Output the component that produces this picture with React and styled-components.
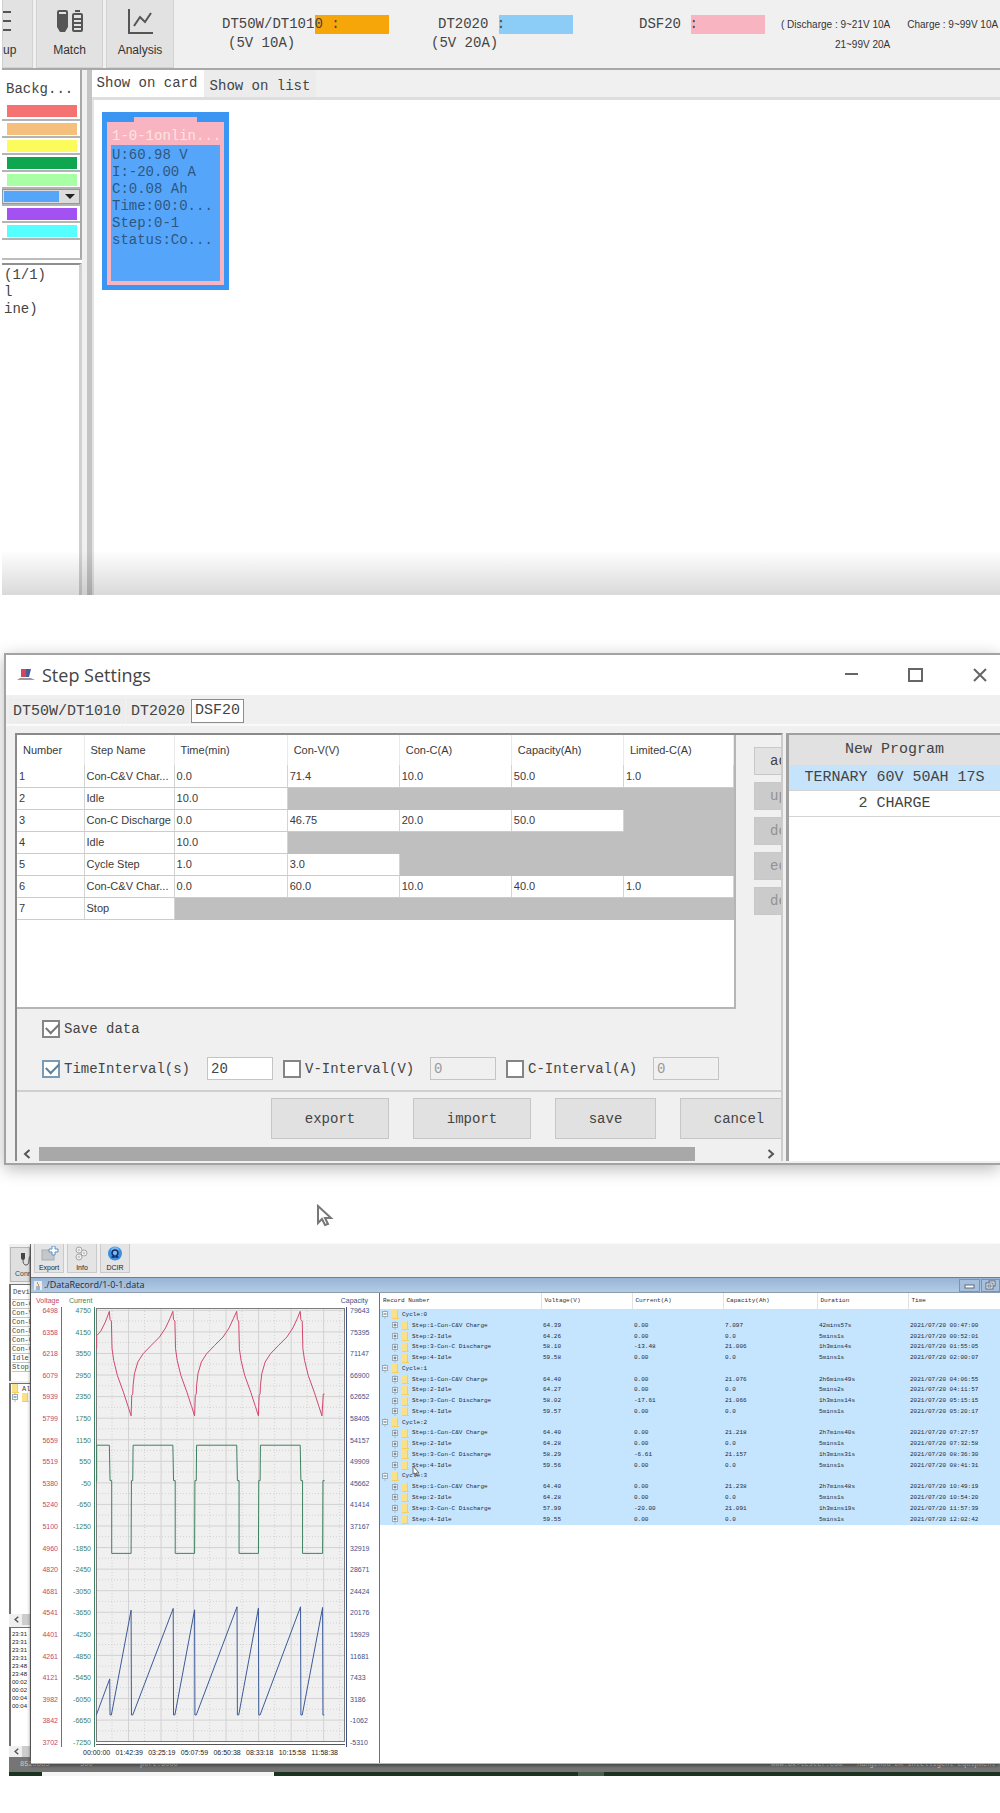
import React, { useState } from 'react'
import styled, { createGlobalStyle } from 'styled-components'

const MONO = '"Liberation Mono", monospace'
const SANS = '"Liberation Sans", Arial, sans-serif'
const UI = '"Open Sans", "Noto Sans", sans-serif'

const GlobalStyle = createGlobalStyle`
    *{
        box-sizing: border-box;
    }
    body{
        margin: 0;
        background: #ffffff;
        color: #444444;
        font-family: ${MONO};
    }
    button, input, select{
        font-family: inherit;
        color: inherit;
        margin: 0;
        border-radius: 0;
    }
    table{
        border-collapse: collapse;
        border-spacing: 0;
    }
    th, td{
        padding: 0;
        text-align: left;
        font-weight: normal;
    }
`

const Page = styled.div`
    overflow: hidden;
`

/* ---------- device monitor ---------- */

const Monitor = styled.section`
    position: relative;
    margin-left: 2px;
    min-height: 595px;
    display: flex;
    flex-direction: column;
    font-size: 14px;
`
const Fade = styled.div`
    position: absolute;
    left: 0;
    right: 0;
    bottom: 0;
    height: 45px;
    background: linear-gradient(rgba(0,0,0,0), rgba(0,0,0,.15));
    pointer-events: none;
`
const Toolbar = styled.div`
    display: flex;
    height: 70px;
    background: #f0f0f0;
    border-bottom: 2px solid #a8a8a8;
    white-space: nowrap;
`
const ToolButton = styled.button`
    flex: none;
    width: ${props => props.$w}px;
    margin-right: 3px;
    padding: 8px 0 0;
    display: flex;
    flex-direction: column;
    align-items: ${props => props.$start ? 'flex-start' : 'center'};
    gap: 8px;
    overflow: hidden;
    background: #e2e2e2;
    border: 1px solid #d2d2d2;
    border-top: 0;
    font: 12px/16px ${SANS};
    color: #333333;
    svg{
        flex: none;
    }
`
const Legend = styled.div`
    flex: none;
    width: ${props => props.$w}px;
    padding-top: 15px;
    line-height: 19px;
    padding-left: ${props => props.$pad || 0}px;
`
const LegendLine = styled.div`
    display: flex;
    span{
        position: relative;
        z-index: 1;
        white-space: pre;
    }
`
const LegendSub = styled.div`
    padding-left: ${props => props.$pad || 0}px;
`
const Swatch = styled.i`
    width: 74px;
    height: 19px;
    margin-left: -${props => props.$under}px;
    background: ${props => props.$color};
`
const Limits = styled.div`
    flex: none;
    padding-top: 15px;
    margin-right: 17px;
    text-align: right;
    font: 10px/20px ${SANS};
    color: #333333;
`
const Body = styled.div`
    flex: 1;
    display: flex;
`
const Sidebar = styled.aside`
    flex: none;
    width: 85px;
    display: flex;
    flex-direction: column;
    background: #ffffff;
    border-right: 5px solid #f0f0f0;
`
const ColorPanel = styled.div`
    height: 190px;
    border-right: 2px solid #a8a8a8;
    border-bottom: 2px solid #bdbdbd;
    table{
        width: 100%;
    }
    th{
        height: 33px;
        padding: 4px 0 0 4px;
    }
    td{
        height: 17px;
        padding: 0 3px 0 5px;
        border-bottom: 2px solid #b4b4b4;
    }
    td.picker{
        padding: 0;
    }
`
const ColorBar = styled.div`
    height: 12px;
    background: ${props => props.$color};
`
const ColorPicker = styled.div`
    display: flex;
    height: 15px;
    padding: 1px;
    background: #dcdcdc;
    border: 1px solid #8a9aa8;
    select{
        flex: 1;
        min-width: 0;
        height: 11px;
        padding: 0;
        border: 0;
        appearance: none;
        background: #55a6f8;
        color: transparent;
    }
    svg{
        flex: none;
        margin-left: 3px;
    }
`
const TreePanel = styled.div`
    flex: 1;
    margin-top: 3px;
    padding: 2px 0 0 2px;
    border-top: 2px solid #8f8f8f;
    border-right: 3px solid #d0d0d0;
    line-height: 17px;
    overflow: hidden;
`
const Main = styled.div`
    flex: 1;
    min-width: 0;
    display: flex;
    flex-direction: column;
    border-left: 5px solid #c4c4c4;
`
const MonitorTabs = styled.div`
    display: flex;
    height: 30px;
    background: #f0f0f0;
    border-bottom: 3px solid #dedede;
`
const MonitorTab = styled.button`
    width: 112px;
    padding: ${props => props.$active ? '0 2px 1px 0' : '4px 0 0'};
    border: 0;
    background: ${props => props.$active ? '#ffffff' : '#ececec'};
    font-size: 14px;
    text-align: center;
    white-space: nowrap;
`
const CardArea = styled.div`
    flex: 1;
    padding: 12px 8px;
    border-left: 2px solid #e4e4e4;
`
const Card = styled.div`
    width: 127px;
    height: 178px;
    padding: 5px;
    display: flex;
    flex-direction: column;
    align-items: center;
    background: #3a96f2;
    color: #2f567f;
`
const CardCap = styled.div`
    width: 63px;
    height: 5px;
    background: #f9b4c2;
`
const CardFrame = styled.div`
    align-self: stretch;
    flex: 1;
    padding: 0 4px 4px;
    display: flex;
    flex-direction: column;
    background: #f9b4c2;
    white-space: nowrap;
`
const CardTitle = styled.div`
    height: 23px;
    padding: 6px 0 0 1px;
    line-height: 17px;
    color: #fde4e0;
`
const CardInfo = styled.div`
    flex: 1;
    padding: 2px 0 0 1px;
    line-height: 17px;
    background: #55a6fb;
`

/* ---------- step settings ---------- */

const Dialog = styled.section`
    margin: 58px 0 0 4px;
    border: 2px solid #a3a3a3;
    border-right: 0;
    background: #f0f0f0;
    box-shadow: 0 4px 16px rgba(0,0,0,.28);
    font-size: 14px;
`
const TitleBar = styled.div`
    display: flex;
    align-items: center;
    height: 40px;
    padding: 0 12px 0 11px;
    background: #ffffff;
    h2{
        flex: 1;
        margin: 0 0 0 7px;
        font: 18px/24px ${UI};
    }
`
const WindowButton = styled.button`
    width: 16px;
    height: 16px;
    margin-left: 48px;
    padding: 0;
    border: 0;
    background: none;
    svg{
        display: block;
    }
`
const DialogTabs = styled.div`
    display: flex;
    gap: 2px;
    height: 29px;
    padding: 4px 0 1px 3px;
`
const DialogTab = styled.button`
    padding: ${props => props.$active ? '0 3px' : '2px 3px 0'};
    border: 1px solid ${props => props.$active ? '#8c8c8c' : '#ebebeb'};
    background: ${props => props.$active ? '#ffffff' : '#ededed'};
    font-size: 15px;
    line-height: 20px;
`
const DialogBody = styled.div`
    display: flex;
    padding: 7px 0 2px 9px;
    border-top: 2px solid #fafafa;
`
const Editor = styled.div`
    flex: 1;
    min-width: 0;
    overflow: hidden;
    border-top: 2px solid #8a8a8a;
    border-left: 2px solid #8a8a8a;
    border-right: 2px solid #cccccc;
`
const EditorTop = styled.div`
    display: flex;
`
const StepTableBox = styled.div`
    flex: 1;
    min-width: 0;
    min-height: 274px;
    background: #ffffff;
    border-right: 2px solid #b5b5b5;
    border-bottom: 2px solid #b5b5b5;
`
const StepTable = styled.table`
    width: 100%;
    table-layout: fixed;
    font: 11px/16px ${SANS};
    color: #3a3a3a;
    th{
        height: 30px;
        padding-left: 6px;
        border-right: 1px solid #ebebeb;
    }
    td{
        height: 22px;
        padding-left: 2px;
        white-space: nowrap;
        overflow: hidden;
    }
`
const StepCell = styled.td`
    background: ${props => props.$off ? '#bfbfbf' : '#ffffff'};
    border-right: 1px solid ${props => props.$off ? '#bfbfbf' : '#d4d4d4'};
    border-bottom: 1px solid ${props => props.$off ? '#bfbfbf' : '#cccccc'};
`
const SideButtons = styled.div`
    flex: none;
    width: 45px;
    display: flex;
    flex-direction: column;
    gap: 7px;
    padding: 12px 0 0 18px;
    overflow: hidden;
`
const SideButton = styled.button`
    width: 70px;
    height: 28px;
    padding: 0 0 0 15px;
    text-align: left;
    border: 1px solid #c8c8c8;
    background: #e2e2e2;
    font-size: 14px;
    &:disabled{
        background: #cbcbcb;
        color: #929292;
    }
`
const Options = styled.div`
    padding: 10px 0 10px 25px;
    border-bottom: 2px solid #cfcfcf;
    display: flex;
    flex-direction: column;
    gap: 19px;
`
const OptionRow = styled.div`
    display: flex;
    align-items: center;
    height: ${props => props.$tall ? 23 : 19}px;
`
const Check = styled.label`
    flex: none;
    display: flex;
    align-items: center;
    gap: 4px;
    width: ${props => props.$w}px;
    white-space: nowrap;
    input{
        appearance: none;
        position: relative;
        width: 18px;
        height: 18px;
        background: #ffffff;
        border: 2px solid ${props => props.$hot ? '#7a9bb5' : '#858585'};
    }
    input:checked::after{
        content: '';
        position: absolute;
        left: 2px;
        top: 1px;
        width: 11px;
        height: 6px;
        border-left: 2px solid ${props => props.$hot ? '#5f8099' : '#777777'};
        border-bottom: 2px solid ${props => props.$hot ? '#5f8099' : '#777777'};
        transform: rotate(-45deg);
    }
`
const NumberBox = styled.input`
    flex: none;
    width: 66px;
    height: 23px;
    margin-right: 10px;
    padding: 0 3px;
    border: 1px solid #c4c4c4;
    background: #ffffff;
    font-size: 14px;
    &:disabled{
        background: #f0f0f0;
        color: #9a9a9a;
    }
`
const Footer = styled.div`
    display: flex;
    gap: 24px;
    padding: 6px 0 7px 254px;
`
const FooterButton = styled.button`
    flex: none;
    width: ${props => props.$w || 118}px;
    height: 41px;
    padding: 0;
    border: 1px solid #c6c6c6;
    background: #e1e1e1;
    font-size: 14px;
`
const ScrollTrack = styled.div`
    display: flex;
    align-items: center;
    gap: 7px;
    height: 15px;
    padding: 0 5px;
    svg{
        flex: none;
    }
`
const ScrollThumb = styled.div`
    flex: none;
    width: 87%;
    height: 14px;
    margin-right: auto;
    background: #a8a8a8;
`
const Programs = styled.div`
    flex: none;
    width: 214px;
    margin-left: 3px;
    background: #ffffff;
    border-top: 2px solid #a0a0a0;
    border-left: 3px solid #a0a0a0;
`
const ProgramHead = styled.div`
    height: 30px;
    line-height: 30px;
    background: #e1e1e1;
    text-align: center;
    font-size: 15px;
`
const Program = styled.button`
    display: block;
    width: 100%;
    height: 26px;
    padding: 0;
    border: 0;
    border-bottom: 1px solid #d4d4d4;
    background: ${props => props.$active ? '#c6e3fc' : '#ffffff'};
    text-align: center;
    white-space: nowrap;
    font-size: 15px;
`
const Pointer = styled.div`
    height: 79px;
    padding: 39px 0 0 316px;
`

/* ---------- data record ---------- */

const Record = styled.section`
    margin-left: 9px;
    margin-bottom: 37px;
`
const RecordRow = styled.div`
    display: flex;
`
const Behind = styled.div`
    flex: none;
    width: 22px;
    height: 513px;
    overflow: hidden;
    display: flex;
    flex-direction: column;
    background: #f0f0f0;
    border-right: 1px solid #6d6d6d;
    white-space: nowrap;
    font-size: 7px;
`
const BehindTool = styled.div`
    height: 35px;
    margin: 3px 0 0 1px;
    padding: 4px 0 0 4px;
    background: #dfdfdf;
    border: 1px solid #b8b8b8;
    font: 7px/10px ${SANS};
    svg{
        display: block;
        margin-left: 5px;
    }
`
const BehindPanel = styled.div`
    flex: ${props => props.$h ? 'none' : 1};
    height: ${props => props.$h ? props.$h + 'px' : 'auto'};
    margin-top: 2px;
    padding-left: 1px;
    background: #ffffff;
    border-top: 1px solid #707070;
    border-left: 2px solid #707070;
    overflow: hidden;
`
const StepNames = styled.div`
    display: grid;
    grid-auto-rows: 1fr;
    height: 87px;
    div{
        display: flex;
        align-items: center;
        border-bottom: 1px solid #c4c4c4;
    }
    div:first-child{
        grid-row: span 2;
        padding-left: 1px;
    }
`
const Log = styled.div`
    padding: 2px 0 0 0;
    font: 6px/8px ${SANS};
    color: #222222;
`
const MiniScroll = styled.div`
    flex: none;
    height: 11px;
    padding: 2px 0 0 4px;
    background: linear-gradient(90deg, #f0f0f0 13px, #cdcdcd 13px);
    svg{
        display: block;
    }
`
const Window = styled.div`
    flex: 1;
    min-width: 0;
    height: 520px;
    margin-bottom: -7px;
    position: relative;
    display: flex;
    flex-direction: column;
    background: #ffffff;
    border-bottom: 1px solid #b5b5b5;
    box-shadow: -1px 2px 3px rgba(0,0,0,.4);
`
const WindowTools = styled.div`
    display: flex;
    gap: 3px;
    height: 33px;
    padding: 0 3px 4px;
    background: #f0f0f0;
`
const WindowTool = styled.button`
    width: 30px;
    padding: 2px 0 0;
    display: flex;
    flex-direction: column;
    align-items: center;
    gap: 2px;
    border: 1px solid #c9c9c9;
    border-top: 0;
    background: #e4e4e4;
    font: 7px/9px ${SANS};
    color: #222222;
`
const WindowTitle = styled.div`
    display: flex;
    align-items: center;
    height: 16px;
    padding-left: 3px;
    border-top: 1px solid #6c7f94;
    border-bottom: 1px solid #8c9bab;
    background: linear-gradient(#97b4d4, #b3cce6);
    span{
        flex: 1;
        margin-left: 2px;
        font: 9px/14px ${UI};
        color: #1c2a3a;
    }
`
const TitleButton = styled.button`
    width: 21px;
    height: 13px;
    margin-left: 1px;
    padding: 0;
    border: 1px solid #7d93ab;
    background: #a5bfdc;
    &:last-child{
        width: 19px;
    }
    svg{
        display: block;
        margin: 0 auto;
    }
`
const WindowBody = styled.div`
    flex: 1;
    display: flex;
    min-height: 0;
`
const ChartPane = styled.div`
    flex: none;
    width: 348px;
    font: 7px/8px ${SANS};
`
const ChartHead = styled.div`
    display: flex;
    padding: 4px 11px 0 5px;
`
const AxisName = styled.span`
    width: 33px;
    color: ${props => props.$color};
    &:last-child{
        width: auto;
        margin-left: auto;
    }
`
const ChartRow = styled.div`
    display: flex;
    height: 442px;
    padding-right: 9px;
`
const Axis = styled.div`
    display: flex;
    flex-direction: column;
    justify-content: space-between;
    width: ${props => props.$w}px;
    margin-top: 2px;
    padding: 0 3px;
    text-align: ${props => props.$left ? 'left' : 'right'};
    color: ${props => props.$color};
    border-right: ${props => props.$left ? 0 : '1px solid'};
    border-left: ${props => props.$left ? '1px solid' : 0};
`
const Plot = styled.div`
    flex: 1;
    min-width: 0;
    margin: 3px 1px 2px;
    border-bottom: 1px solid #555555;
    svg{
        display: block;
        width: 100%;
        height: 434px;
    }
`
const TimeLabels = styled.div`
    display: flex;
    justify-content: space-between;
    padding: 2px 41px 0 52px;
    color: #222222;
`
const GridPane = styled.div`
    flex: 1;
    min-width: 0;
    overflow: hidden;
    border-left: 1px solid #707070;
`
const RecordTable = styled.table`
    width: 100%;
    height: 232px;
    table-layout: fixed;
    font-size: 6px;
    line-height: 8px;
    color: #1f2a36;
    white-space: nowrap;
    th{
        height: 16px;
        padding-left: 3px;
        border-right: 1px solid #e2e2e2;
        border-bottom: 1px solid #d5dde5;
    }
    td{
        padding-left: 2px;
        background: #c5e4fd;
    }
`
const TreeNode = styled.div`
    display: flex;
    align-items: center;
    gap: 3px;
    padding-left: ${props => props.$depth * 10}px;
    svg{
        flex: none;
    }
`
const Arrow = styled.svg`
    position: absolute;
    left: ${props => props.$x}px;
    top: ${props => props.$y}px;
`
const StatusBar = styled.div`
    display: flex;
    align-items: center;
    height: 15px;
    padding: 0 0 1px 11px;
    background: #757575;
    color: #cfcfcf;
    font: 7px/8px ${MONO};
    white-space: nowrap;
    overflow: hidden;
    span{
        flex: none;
        width: ${props => props.$w}px;
    }
    span.site{
        margin-left: auto;
        width: 86px;
    }
    span.company{
        width: 143px;
    }
`
const Taskbar = styled.div`
    height: 4px;
    background: linear-gradient(90deg, #1c3322 33px, #f5f5f5 33px, #f5f5f5 265px, #1c3322 265px,
        #1c3322 569px, #4b5f50 569px, #4b5f50 595px, #1c3322 595px);
`

const barColors = ['#f57272', '#f5bf7c', '#fbfb5c', '#0fa650', '#a8ffa4', null, '#a351f3', '#55ffff']

const cardLines = ['U:60.98 V', 'I:-20.00 A', 'C:0.08 Ah', 'Time:00:0...', 'Step:0-1', 'status:Co...']

const stepHeads = ['Number', 'Step Name', 'Time(min)', 'Con-V(V)', 'Con-C(A)', 'Capacity(Ah)', 'Limited-C(A)']
const stepWidths = [67, 90, 113, 112, 112, 112, 110]
const steps = [
    ['1', 'Con-C&V Char...', '0.0', '71.4', '10.0', '50.0', '1.0'],
    ['2', 'Idle', '10.0'],
    ['3', 'Con-C Discharge', '0.0', '46.75', '20.0', '50.0'],
    ['4', 'Idle', '10.0'],
    ['5', 'Cycle Step', '1.0', '3.0'],
    ['6', 'Con-C&V Char...', '0.0', '60.0', '10.0', '40.0', '1.0'],
    ['7', 'Stop'],
]

const voltage = [6498, 6358, 6218, 6079, 5939, 5799, 5659, 5519, 5380, 5240, 5100, 4960, 4820, 4681, 4541, 4401, 4261, 4121, 3982, 3842, 3702]
const current = voltage.map((v, i) => 4750 - i * 600)
const capacity = [79643, 75395, 71147, 66900, 62652, 58405, 54157, 49909, 45662, 41414, 37167, 32919, 28671, 24424, 20176, 15929, 11681, 7433, 3186, -1062, -5310]
const times = ['00:00:00', '01:42:39', '03:25:19', '05:07:59', '06:50:38', '08:33:18', '10:15:58', '11:58:38']

const stepKinds = ['Step:1-Con-C&V Charge', 'Step:2-Idle', 'Step:3-Con-C Discharge', 'Step:4-Idle']
const cycles = [
    [
        ['64.39', '0.00', '7.097', '42mins57s', '2021/07/20 00:47:00'],
        ['64.26', '0.00', '0.0', '5mins1s', '2021/07/20 00:52:01'],
        ['58.10', '-13.48', '21.006', '1h3mins4s', '2021/07/20 01:55:05'],
        ['59.58', '0.00', '0.0', '5mins1s', '2021/07/20 02:00:07'],
    ],
    [
        ['64.40', '0.00', '21.076', '2h6mins49s', '2021/07/20 04:06:55'],
        ['64.27', '0.00', '0.0', '5mins2s', '2021/07/20 04:11:57'],
        ['58.02', '-17.61', '21.066', '1h3mins14s', '2021/07/20 05:15:15'],
        ['59.57', '0.00', '0.0', '5mins1s', '2021/07/20 05:20:17'],
    ],
    [
        ['64.40', '0.00', '21.218', '2h7mins40s', '2021/07/20 07:27:57'],
        ['64.28', '0.00', '0.0', '5mins1s', '2021/07/20 07:32:58'],
        ['58.29', '-6.61', '21.157', '1h3mins31s', '2021/07/20 08:36:30'],
        ['59.56', '0.00', '0.0', '5mins1s', '2021/07/20 08:41:31'],
    ],
    [
        ['64.40', '0.00', '21.238', '2h7mins48s', '2021/07/20 10:49:19'],
        ['64.28', '0.00', '0.0', '5mins1s', '2021/07/20 10:54:20'],
        ['57.99', '-20.00', '21.091', '1h3mins19s', '2021/07/20 11:57:39'],
        ['59.55', '0.00', '0.0', '5mins1s', '2021/07/20 12:02:42'],
    ],
]

// x of the end of each charge and of each discharge, in plot units
const peaks = [40, 230, 421, 611]
const troughs = [105, 295, 486, 678]
const capPeaks = [1111, 900, 895, 895]
const capTroughs = [905, 904, 899, 897]

const fall = [[0, 10], [2, 35], [6, 39], [8, 122], [13, 157], [24, 202], [42, 252], [56, 295], [65, 323]]
const rise = [[2, 262], [5, 257], [6, 232], [10, 197], [20, 162], [36, 137], [60, 112], [85, 87], [103, 60], [116, 32]]

const shift = (pts, dx) => pts.map(([x, y]) => [x + dx, y])

const buildLines = () => {
    let volt = [[2, 122], [2, 83], [14, 70], [28, 42]]
    let amp = [[2, 520], [2, 411]]
    let cap = [[1, 1219]]
    peaks.forEach((p, i) => {
        const t = troughs[i]
        volt = volt.concat(shift(fall, p))
        amp.push([p, 411], [p + 2, 517], [p + 7, 517], [p + 7, 735], [t, 735], [t + 1, 517])
        cap.push([p + 1, capPeaks[i]], [p + 2, 1219], [p + 6, 1219], [t, capTroughs[i]], [t + 1, 1219], [t + 5, 1219])
        if (i < 3) {
            volt = volt.concat(shift(rise, t))
            amp.push([t + 5, 517], [t + 6, 411])
        }
    })
    volt.push([680, 258], [684, 258])
    amp.push([684, 517])
    return [[volt, '#d2486e'], [amp, '#3f8062'], [cap, '#3c5a99']]
}

const rows = [...Array(21).keys()]
const cols = [...Array(8).keys()]

const Chart = () => {
    const thin = { vectorEffect: 'non-scaling-stroke', strokeWidth: 1 }
    return (
        <svg viewBox="0 0 745 1300" preserveAspectRatio="none">
            <rect width="745" height="1300" fill="#f0f0f0" />
            {rows.map(i => (
                <g key={i} stroke="#d2d2d2">
                    <line x1="0" x2="745" y1={7 + i * 64.6} y2={7 + i * 64.6} {...thin} />
                    <line x1="0" x2="745" y1={39 + i * 64.6} y2={39 + i * 64.6} strokeDasharray="1 2" {...thin} />
                </g>
            ))}
            {cols.map(i => (
                <g key={i} stroke="#d2d2d2">
                    <line y1="0" y2="1300" x1={i * 97.3} x2={i * 97.3} {...thin} />
                    <line y1="0" y2="1300" x1={48 + i * 97.3} x2={48 + i * 97.3} strokeDasharray="1 2" {...thin} />
                </g>
            ))}
            <rect x="1" y="1" width="743" height="1298" fill="none" stroke="#666666" {...thin} />
            {buildLines().map(([pts, color]) => (
                <polyline key={color} points={pts.map(p => p.join(',')).join(' ')} fill="none" stroke={color} {...thin} strokeLinejoin="round" />
            ))}
        </svg>
    )
}

const Folder = () => (
    <svg width="7" height="9" viewBox="0 0 7 9">
        <path d="M0 0h6v8h1v1H0z" fill="#f0cf64" />
        <path d="M0 0h5v8H0z" fill="#fbe08a" />
    </svg>
)

const Toggle = ({ open }) => (
    <svg width="7" height="9" viewBox="0 0 7 9">
        <path d="M3 0v9" stroke="#a9bccb" strokeWidth="1" />
        <rect x="0.5" y="1.5" width="5" height="5" fill="#f4f8fb" stroke="#9aabb9" />
        <path d={open ? 'M1.500 4h3' : 'M1.500 4h3M3 2.500v3'} stroke="#5c6872" strokeWidth="1" />
    </svg>
)

const Chevron = ({ right, size = 10 }) => (
    <svg width={size} height={size} viewBox="0 0 10 10">
        <path d={right ? 'M2.500 1l4.500 4-4.500 4' : 'M7.500 1L3 5l4.500 4'} fill="none" stroke="#555555" strokeWidth="2" />
    </svg>
)

const MonitorView = () => {
    const [tab, setTab] = useState(0)
    return (
        <Monitor>
            <Toolbar>
                <ToolButton $w={31} $start aria-label="Setup">
                    <svg width="28" height="26" viewBox="0 0 28 26">
                        <path d="M0 4h8M0 13h8M0 22h8" stroke="#555555" strokeWidth="2" />
                    </svg>
                    <span>up</span>
                </ToolButton>
                <ToolButton $w={67}>
                    <svg width="28" height="26" viewBox="0 0 28 26">
                        <path d="M1 4q0-2 2-2h7q2 0 2 2v15l-3 5H4l-3-5z" fill="#555555" />
                        <path d="M3 5h7" stroke="#e2e2e2" strokeWidth="2" />
                        <rect x="17" y="6" width="9" height="17" rx="1" fill="none" stroke="#555555" strokeWidth="2" />
                        <path d="M19 3h5M18 11h7M18 15h7M18 19h7" stroke="#555555" strokeWidth="2" />
                    </svg>
                    <span>Match</span>
                </ToolButton>
                <ToolButton $w={68}>
                    <svg width="28" height="26" viewBox="0 0 28 26">
                        <path d="M3 1v24h24" fill="none" stroke="#555555" strokeWidth="2" />
                        <path d="M8 18l6-9 5 5 6-9" fill="none" stroke="#555555" strokeWidth="2" />
                    </svg>
                    <span>Analysis</span>
                </ToolButton>
                <Legend $w={254} $pad={45}>
                    <LegendLine><span>DT50W/DT1010 :</span><Swatch $color="#f7a60a" $under={25} /></LegendLine>
                    <LegendSub $pad={6}>(5V 10A)</LegendSub>
                </Legend>
                <Legend $w={208}>
                    <LegendLine><LegendSub $pad={7} /><span>{'DT2020 :'}</span><Swatch $color="#8bcdf6" $under={6} /></LegendLine>
                    <LegendSub>(5V 20A)</LegendSub>
                </Legend>
                <Legend $w={142}>
                    <LegendLine><span>{'DSF20 :'}</span><Swatch $color="#f9b4c2" $under={7} /></LegendLine>
                </Legend>
                <Limits>( Discharge : 9~21V 10A<br />21~99V 20A</Limits>
                <Limits>Charge : 9~99V 10A</Limits>
            </Toolbar>
            <Body>
                <Sidebar>
                    <ColorPanel>
                        <table>
                            <thead><tr><th>Backg...</th></tr></thead>
                            <tbody>
                                {barColors.map((c, i) => (
                                    <tr key={i}>
                                        {
                                            c ? <td><ColorBar $color={c} /></td>
                                                : <td className="picker">
                                                    <ColorPicker>
                                                        <select aria-label="Background"><option></option></select>
                                                        <svg width="16" height="11" viewBox="0 0 16 11"><path d="M3 3h10l-5 5z" fill="#222222" /></svg>
                                                    </ColorPicker>
                                                </td>
                                        }
                                    </tr>
                                ))}
                            </tbody>
                        </table>
                    </ColorPanel>
                    <TreePanel>
                        <div>(1/1)</div>
                        <div>l</div>
                        <div>ine)</div>
                    </TreePanel>
                </Sidebar>
                <Main>
                    <MonitorTabs>
                        {['Show on card', 'Show on list'].map((t, i) => (
                            <MonitorTab key={t} $active={tab === i} onClick={() => setTab(i)}>{t}</MonitorTab>
                        ))}
                    </MonitorTabs>
                    <CardArea>
                        <Card>
                            <CardCap />
                            <CardFrame>
                                <CardTitle>1-0-1onlin...</CardTitle>
                                <CardInfo>
                                    {cardLines.map(l => <div key={l}>{l}</div>)}
                                </CardInfo>
                            </CardFrame>
                        </Card>
                    </CardArea>
                </Main>
            </Body>
            <Fade />
        </Monitor>
    )
}

const StepSettings = () => {
    const [tab, setTab] = useState(2)
    const [program, setProgram] = useState(0)
    return (
        <Dialog>
            <TitleBar>
                <svg width="18" height="14" viewBox="0 0 18 14">
                    <path d="M4 1h5v8H4z" fill="#cf4a57" />
                    <path d="M9 1h5l-2 8H9z" fill="#4a5a9c" />
                    <path d="M0 12l3-2h11l4 2z" fill="#9a9aa0" />
                </svg>
                <h2>Step Settings</h2>
                <WindowButton aria-label="Minimize">
                    <svg width="16" height="16" viewBox="0 0 16 16"><path d="M1 7h13" stroke="#666666" strokeWidth="2" /></svg>
                </WindowButton>
                <WindowButton aria-label="Maximize">
                    <svg width="16" height="16" viewBox="0 0 16 16"><rect x="1" y="2" width="13" height="12" fill="none" stroke="#666666" strokeWidth="2" /></svg>
                </WindowButton>
                <WindowButton aria-label="Close">
                    <svg width="16" height="16" viewBox="0 0 16 16"><path d="M2 2l12 12M14 2L2 14" stroke="#666666" strokeWidth="2" /></svg>
                </WindowButton>
            </TitleBar>
            <DialogTabs>
                {['DT50W/DT1010', 'DT2020', 'DSF20'].map((t, i) => (
                    <DialogTab key={t} $active={tab === i} onClick={() => setTab(i)}>{t}</DialogTab>
                ))}
            </DialogTabs>
            <DialogBody>
                <Editor>
                    <EditorTop>
                        <StepTableBox>
                            <StepTable>
                                <colgroup>
                                    {stepWidths.map((w, i) => <col key={i} width={w} />)}
                                </colgroup>
                                <thead>
                                    <tr>{stepHeads.map(h => <th key={h}>{h}</th>)}</tr>
                                </thead>
                                <tbody>
                                    {steps.map(s => (
                                        <tr key={s[0]}>
                                            {stepHeads.map((h, i) => (
                                                <StepCell key={h} $off={s[i] === undefined}>{s[i]}</StepCell>
                                            ))}
                                        </tr>
                                    ))}
                                </tbody>
                            </StepTable>
                        </StepTableBox>
                        <SideButtons>
                            <SideButton>add</SideButton>
                            <SideButton disabled>up</SideButton>
                            <SideButton disabled>down</SideButton>
                            <SideButton disabled>edit</SideButton>
                            <SideButton disabled>delete</SideButton>
                        </SideButtons>
                    </EditorTop>
                    <Options>
                        <OptionRow>
                            <Check><input type="checkbox" defaultChecked />Save data</Check>
                        </OptionRow>
                        <OptionRow $tall>
                            <Check $w={165} $hot><input type="checkbox" defaultChecked />TimeInterval(s)</Check>
                            <NumberBox aria-label="Time interval" defaultValue="20" />
                            <Check $w={147}><input type="checkbox" />V-Interval(V)</Check>
                            <NumberBox aria-label="V interval" defaultValue="0" disabled />
                            <Check $w={147}><input type="checkbox" />C-Interval(A)</Check>
                            <NumberBox aria-label="C interval" defaultValue="0" disabled />
                        </OptionRow>
                    </Options>
                    <Footer>
                        <FooterButton>export</FooterButton>
                        <FooterButton>import</FooterButton>
                        <FooterButton $w={101}>save</FooterButton>
                        <FooterButton>cancel</FooterButton>
                    </Footer>
                    <ScrollTrack>
                        <Chevron />
                        <ScrollThumb />
                        <Chevron right />
                    </ScrollTrack>
                </Editor>
                <Programs>
                    <ProgramHead>New Program</ProgramHead>
                    {['TERNARY 60V 50AH 17S', '2 CHARGE'].map((p, i) => (
                        <Program key={p} $active={program === i} onClick={() => setProgram(i)}>{p}</Program>
                    ))}
                </Programs>
            </DialogBody>
        </Dialog>
    )
}

const DataRecord = () => (
    <Record>
        <RecordRow>
            <Behind>
                <BehindTool>
                    <svg width="14" height="17" viewBox="0 0 14 17">
                        <path d="M1 1h4v5q0 2-2 2t-2-2z" fill="#444444" />
                        <path d="M3 8q0 5 3 5t3-5 4-5" fill="none" stroke="#555555" />
                    </svg>
                    Connect
                </BehindTool>
                <BehindPanel $h={97}>
                    <StepNames>
                        <div>Device</div>
                        {['Con-C', 'Con-V', 'Con-P', 'Con-R', 'Con-C&V', 'Con-C', 'Idle', 'Stop'].map((s, i) => <div key={i}>{s}</div>)}
                    </StepNames>
                </BehindPanel>
                <BehindPanel>
                    <TreeNode $depth={0}><Folder />All</TreeNode>
                    <TreeNode $depth={0}><Toggle open /><Folder /></TreeNode>
                </BehindPanel>
                <MiniScroll><Chevron size={7} /></MiniScroll>
                <BehindPanel $h={119}>
                    <Log>
                        {['23:31', '23:31', '23:31', '23:31', '23:48', '23:48', '00:02', '00:02', '00:04', '00:04'].map((t, i) => <div key={i}>{t}</div>)}
                    </Log>
                </BehindPanel>
                <MiniScroll><Chevron size={7} /></MiniScroll>
            </Behind>
            <Window>
                <WindowTools>
                    <WindowTool>
                        <svg width="22" height="15" viewBox="0 0 22 15">
                            <rect x="4" y="4" width="12" height="10" fill="#c4c8cc" stroke="#a8adb2" />
                            <path d="M14 0h3v3h3v3h-3v3h-3V6h-3V3h3z" fill="#ffffff" stroke="#5a8fc4" />
                        </svg>
                        Export
                    </WindowTool>
                    <WindowTool>
                        <svg width="22" height="15" viewBox="0 0 22 15" fill="#eeeeee" stroke="#a5a5a5">
                            <circle cx="8" cy="4" r="3" />
                            <circle cx="13" cy="7" r="3" />
                            <circle cx="8" cy="11" r="3" />
                            <path d="M8 3v2M13 6v2M8 10v2" />
                        </svg>
                        Info
                    </WindowTool>
                    <WindowTool>
                        <svg width="22" height="15" viewBox="0 0 22 15">
                            <circle cx="11" cy="7.500" r="7" fill="#3d8fe0" />
                            <circle cx="11" cy="5" r="4" fill="#77b8f2" />
                            <path d="M7.500 11h2.500v-1q-2-1-2-3 0-3 3-3t3 3q0 2-2 3v1h2.500" fill="none" stroke="#0e2c66" strokeWidth="1.500" />
                        </svg>
                        DCIR
                    </WindowTool>
                </WindowTools>
                <WindowTitle>
                    <svg width="8" height="9" viewBox="0 0 8 9">
                        <rect width="8" height="9" fill="#e9edf2" />
                        <path d="M4 1q-2 1 0 2t0 2" fill="none" stroke="#e08a3c" />
                        <path d="M2 6h4M2 8h4" stroke="#5c7c9c" />
                    </svg>
                    <span>./DataRecord/1-0-1.data</span>
                    <TitleButton aria-label="Minimize">
                        <svg width="11" height="9" viewBox="0 0 11 9"><rect x="1" y="4" width="9" height="3" fill="#ffffff" stroke="#5c6b7c" /></svg>
                    </TitleButton>
                    <TitleButton aria-label="Restore">
                        <svg width="11" height="10" viewBox="0 0 11 10" fill="#ffffff" stroke="#5c6b7c">
                            <rect x="4" y="1" width="6" height="5" />
                            <rect x="1" y="3" width="7" height="6" />
                            <rect x="3" y="5" width="3" height="2" />
                        </svg>
                    </TitleButton>
                </WindowTitle>
                <WindowBody>
                    <ChartPane>
                        <ChartHead>
                            <AxisName $color="#c04a6c">Voltage</AxisName>
                            <AxisName $color="#3f8062">Current</AxisName>
                            <AxisName $color="#3c5188">Capacity</AxisName>
                        </ChartHead>
                        <ChartRow>
                            <Axis $w={31} $color="#c04a6c">{voltage.map(v => <span key={v}>{v}</span>)}</Axis>
                            <Axis $w={33} $color="#3f8062">{current.map(v => <span key={v}>{v}</span>)}</Axis>
                            <Plot><Chart /></Plot>
                            <Axis $w={24} $left $color="#3c5188">{capacity.map(v => <span key={v}>{v}</span>)}</Axis>
                        </ChartRow>
                        <TimeLabels>{times.map(t => <span key={t}>{t}</span>)}</TimeLabels>
                    </ChartPane>
                    <GridPane>
                        <RecordTable>
                            <colgroup>
                                {[161, 91, 91, 94, 91, 92].map((w, i) => <col key={i} width={w} />)}
                            </colgroup>
                            <thead>
                                <tr>
                                    <th>Record Number</th>
                                    <th>Voltage(V)</th>
                                    <th>Current(A)</th>
                                    <th>Capacity(Ah)</th>
                                    <th>Duration</th>
                                    <th>Time</th>
                                </tr>
                            </thead>
                            <tbody>
                                {cycles.map((c, n) => (
                                    <React.Fragment key={n}>
                                        <tr>
                                            <td colSpan={6}><TreeNode $depth={0}><Toggle open /><Folder />Cycle:{n}</TreeNode></td>
                                        </tr>
                                        {c.map((r, i) => (
                                            <tr key={i}>
                                                <td><TreeNode $depth={1}><Toggle /><Folder />{stepKinds[i]}</TreeNode></td>
                                                {r.map((v, j) => <td key={j}>{v}</td>)}
                                            </tr>
                                        ))}
                                    </React.Fragment>
                                ))}
                            </tbody>
                        </RecordTable>
                    </GridPane>
                </WindowBody>
                <Arrow $x={381} $y={221} width="8" height="12" viewBox="0 0 8 12">
                    <path d="M1 1v8l2-1 1 3 1-1-1-2h3z" fill="#ffffff" stroke="#666666" />
                </Arrow>
            </Window>
        </RecordRow>
        <StatusBar $w={60}>
            <span>8520885</span>
            <span>500</span>
            <span>port:8000</span>
            <span className="site">www.dk-tester.com</span>
            <span className="company">Hangzhou DK Intelligent Equipment</span>
        </StatusBar>
        <Taskbar />
    </Record>
)

const App = () => {
    return (
        <Page>
            <GlobalStyle />
            <MonitorView />
            <StepSettings />
            <Pointer>
                <svg width="18" height="24" viewBox="0 0 18 24">
                    <path d="M2 2v17l4-4 3 6 3-1-3-6h6z" fill="#ffffff" stroke="#777777" strokeWidth="2" />
                </svg>
            </Pointer>
            <DataRecord />
        </Page>
    )
}

export default App
